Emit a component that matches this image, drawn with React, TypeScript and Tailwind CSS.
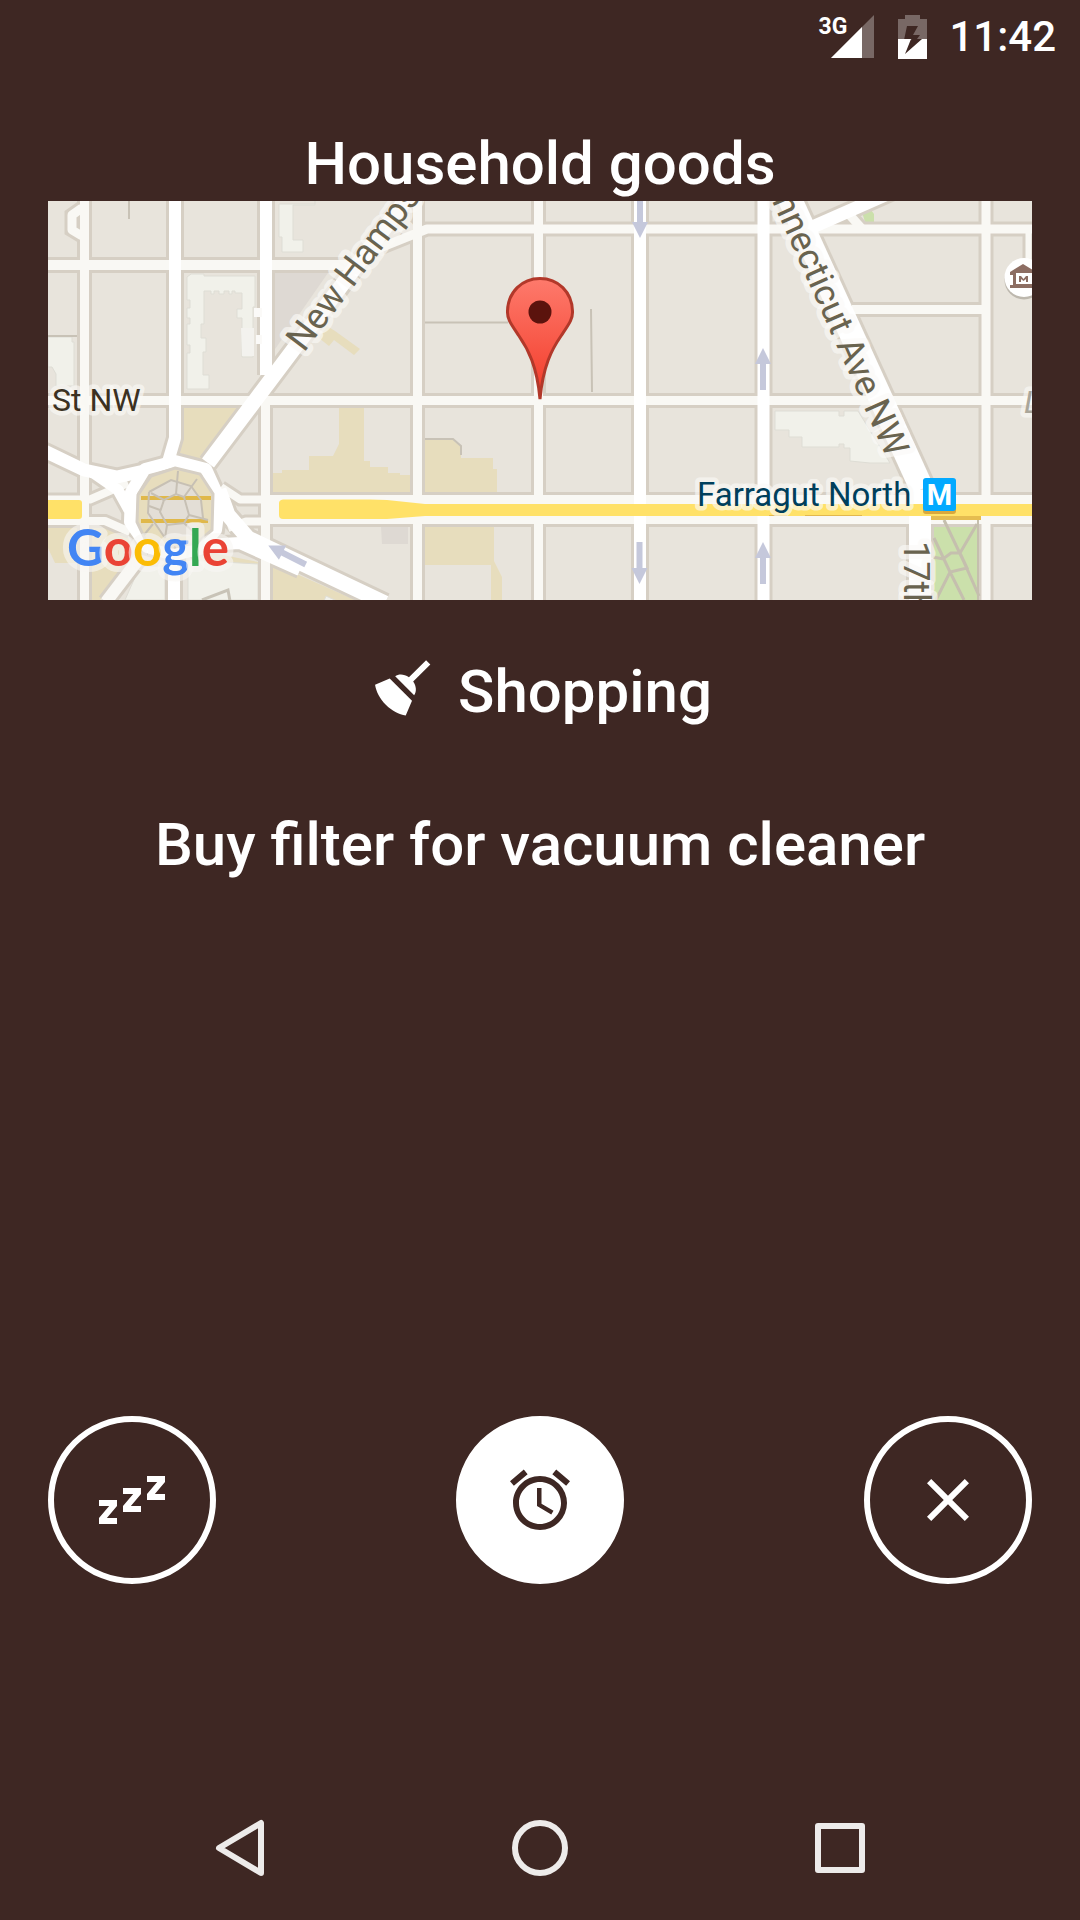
import type { ReactNode } from "react";
import { MdAlarm, MdClose } from "react-icons/md";

const CASING = "#d6cfc4";
const MINOR = "#f9f8f4";
const BEIGE = "#e7ddbd";
const BUILDING = "#f1f1ea";

type Road = { d: string; w: number; color: string };

const roads: Road[] = [
    // side streets
    { d: "M84.500 201V600", w: 9, color: MINOR },
    { d: "M265.500 400V600", w: 9, color: MINOR },
    { d: "M417.500 201V600", w: 9, color: MINOR },
    { d: "M538.500 201V600", w: 9, color: MINOR },
    { d: "M986 201V600", w: 9, color: MINOR },
    { d: "M48 265H350", w: 10, color: MINOR },
    { d: "M360 256L427 229H1032", w: 9, color: MINOR },
    { d: "M48 400.500H1032", w: 9, color: MINOR },
    { d: "M852 309.500H986", w: 9, color: MINOR },
    { d: "M1028.500 229V270", w: 6, color: MINOR },
    { d: "M847 212L863 230", w: 9, color: MINOR },
    { d: "M82 208L72 215V230L82 236", w: 9, color: MINOR },
    { d: "M138 560L106 602", w: 12, color: MINOR },
    // service lanes of the avenue
    { d: "M48 499.500H90L128 483", w: 8, color: MINOR },
    { d: "M48 521H105L130 532", w: 8, color: MINOR },
    { d: "M221 487L240 499.500H270", w: 8, color: MINOR },
    { d: "M228 528L246 521.500H270", w: 8, color: MINOR },
    { d: "M268 509.500H1032", w: 29, color: MINOR },
    // main streets
    { d: "M175 201V438L168 462", w: 12, color: "#fff" },
    { d: "M174 553V600", w: 12, color: "#fff" },
    { d: "M266 201V375", w: 12, color: "#fff" },
    { d: "M640 201V600", w: 12, color: "#fff" },
    { d: "M763.500 201V600", w: 12, color: "#fff" },
    { d: "M208 463L257 398L408 197", w: 15, color: "#fff" },
    { d: "M40 449L84 470L117 477L144 471", w: 13, color: "#fff" },
    { d: "M92 472L118 490L129 510", w: 11, color: "#fff" },
    { d: "M219 490L228 515L248 538L385 603", w: 15, color: "#fff" },
    { d: "M205 545L240 543L300 570", w: 12, color: "#fff" },
    { d: "M808 229L892 192", w: 13, color: "#fff" },
    { d: "M789 197L922 489", w: 24, color: "#fff" },
    { d: "M920 490V604", w: 22, color: "#fff" },
    { d: "M175 461L206 469L220 500L216 530L200 549L174 555L147 547L130 522L131 492L145 469Z", w: 12, color: "#fff" },
];

function Arrow({ x, y, turn }: { x: number; y: number; turn: number }) {
    return (
        <path
            d="M-3 21V-5H-8L0 -21L8 -5H3V21Z"
            transform={`translate(${x} ${y}) rotate(${turn})`}
            fill="#c5c8db"
        />
    );
}

function StreetLabel({ x, y, turn, end, children }: { x: number; y: number; turn: number; end?: boolean; children: ReactNode }) {
    return (
        <text
            transform={`translate(${x} ${y}) rotate(${turn})`}
            textAnchor={end ? "end" : "start"}
            fontSize={36}
            fill="#69634f"
            stroke="#fbfaf7"
            strokeOpacity={0.65}
            strokeWidth={11}
            strokeLinejoin="round"
            paintOrder="stroke"
        >
            {children}
        </text>
    );
}

function StreetMap() {
    return (
        <svg viewBox="48 201 984 399" className="block w-full font-[Roboto,sans-serif]" role="img" aria-label="Map near Farragut North">
            <defs>
                <linearGradient id="pin" x1="0" y1="0" x2="0" y2="1">
                    <stop offset="0" stopColor="#fe7a6c" />
                    <stop offset="1" stopColor="#f23a28" />
                </linearGradient>
            </defs>
            <rect x="48" y="201" width="984" height="399" fill="#e8e4dc" />

            {/* areas */}
            <g fill={BEIGE}>
                <path d="M184 407H243L202 461L180 453Z" />
                <path d="M327 326L335 331L360 349L354 355L334 340L329 346L319 338Z" />
                <path d="M273 492V473H282V470H309V456H333L339 444V407H364V461H370V467H388V473H400V475H410V492Z" />
                <path d="M425 440H453L461 447V458H493V469H497V492H425Z" />
                <path d="M425 526H494V561L502 577V600H491V565H425Z" />
                <path d="M48 527H78V563H55L48 548Z" />
                <path d="M90 527H125L135 560L100 600H90Z" />
                <path d="M192 549L258 562V600H192Z" />
                <path d="M272 563L355 600H272Z" />
            </g>
            <path d="M273 270H330L273 352Z" fill="#ded9d3" />
            <path d="M381 527H408V544H382Z" fill="#ded9d3" />
            <g fill={BUILDING} stroke="#deddd5" strokeWidth="1">
                <path d="M279 204H315V201V205H293V240H303V252H282V237H279Z" />
                <path d="M187 277L191 274H204V276H255V307H253V357H242V318H237V309H242V293H235V291H232V294H229V291H224V294H219V291H214V294H211V291H204V324H201V338H206V352H203V375H209V389H187V353H190V345H187V324H190V318H187V308H190V300H187Z" />
                <path d="M48 337H72V342H74V386H56V374L52 367H48Z" />
                <path d="M775 411H839V416H844V411H858L890 463L870 463L850 461V448H844V444H839V447H802V437H789V430H775Z" />
                <path d="M140 566L125 600H165V566Z" />
                <path d="M188 560L258 564V600H188Z" />
                <path d="M326 596L337 601H324Z" />
            </g>
            <path d="M862 212L871 210L874 214V222H865Z" fill="#cbe0ab" />
            <rect x="928" y="516" width="54" height="84" fill="#cbe0ab" />
            <path d="M202 600L228 590L230 601" fill="none" stroke="#c8c3b7" strokeWidth="3" />
            <g fill="none" stroke="#c8c2b6" strokeWidth="2">
                <path d="M129 201V219M48 336H77M425 322.500H508M591 309L592 392" />
                <path d="M425 439H453L461 446V455" />
            </g>

            {/* streets: every edge first, so that crossings stay open */}
            <g fill="none">
                {roads.map((r) => (
                    <path key={r.d} d={r.d} stroke={CASING} strokeWidth={r.w + 6} />
                ))}
                {roads.map((r) => (
                    <path key={r.d} d={r.d} stroke={r.color} strokeWidth={r.w} strokeLinejoin="round" />
                ))}
            </g>
            <path d="M241 328H254V356H242Z" fill="#f3f2ee" />
            <path d="M254 308H262V317H254ZM256 335H262V344H256Z" fill="#fbfaf8" />

            {/* avenue */}
            <path d="M48 500H79Q82 500 82 503V516Q82 519 79 519H48Z" fill="#ffe168" />
            <path d="M283 499.500H370L387 500L425 504H1032V516H425L387 519H283Q279 519 279 515V503Q279 500 283 499.500Z" fill="#ffe168" />
            <path d="M769 515H787V516H769ZM805 515H862V516H805Z" fill="#e2b84d" />
            <rect x="931" y="516" width="50" height="4" fill="#e5bd50" />

            {/* circle garden */}
            <path d="M175 468L200 474L213 494L212 530L197 543L172 547L146 541L137 522L138 495L151 476Z" fill={BEIGE} stroke={CASING} strokeWidth="3" />
            <path d="M149 491L171 480L191 486L201 500L203 518L190 536L166 538L148 518Z" fill="#e3ded6" />
            <path d="M141 498H211M141 521H208" stroke="#e0b849" strokeWidth="4" />
            <g fill="none" stroke="#c7c0b4" strokeWidth="2">
                <path d="M149 492L171 480L191 486L201 500L203 518M149 492L148 513L165 538" />
                <path d="M164 500L176 494L184 497L189 515L184 523L167 525L160 512Z" />
                <path d="M178 471L176 494M197 479L184 497M151 493L164 500M149 506L160 510M189 515L208 520M184 523L198 536M167 525L165 538M153 524L144 535" />
            </g>

            {/* park paths */}
            <g fill="none" stroke="#c5bfae" strokeWidth="3">
                <path d="M944 520L963 560L979 596M934 538L950 572L964 600M977 524L960 553L967 568L950 572L936 600M933 557L943 559L951 553H960" />
                <path d="M978 520V600" strokeWidth="2" />
            </g>

            <Arrow x={640} y={217} turn={180} />
            <Arrow x={763} y={369} turn={0} />
            <Arrow x={639.5} y={563} turn={180} />
            <Arrow x={763} y={563} turn={0} />
            <Arrow x={287} y={555} turn={-63} />

            <StreetLabel x={304} y={353} turn={-53}>New Hampshire</StreetLabel>
            <StreetLabel x={887} y={459} turn={66} end>Connecticut Ave NW</StreetLabel>
            <StreetLabel x={904} y={541} turn={90}>17th</StreetLabel>

            <g fontSize="32" stroke="#fbfaf7" strokeOpacity="0.65" strokeWidth="9" strokeLinejoin="round" paintOrder="stroke">
                <text x="52" y="411" fill="#3c3122">St NW</text>
                <text x="697" y="506" fontSize="33" fill="#003f5c">Farragut North</text>
                <text x="1024" y="413" fill="#aaa69a" fontStyle="italic">L</text>
            </g>

            {/* metro stop */}
            <rect x="923" y="479" width="33" height="35" rx="3" fill="#d9a83c" />
            <rect x="923" y="478" width="33" height="33" rx="3" fill="#03a9ff" />
            <text x="939.5" y="505" fontSize="29" fontWeight="700" textAnchor="middle" fill="#fff">M</text>

            {/* museum */}
            <circle cx="1024" cy="280" r="19.500" fill="#bdb8ae" />
            <circle cx="1024" cy="277.500" r="19.500" fill="#fff" />
            <path d="M1010 272L1023 264L1036 272V275H1034V285H1036V288H1010V285H1013V275H1010ZM1016 273V284H1032V273Z" fill="#8d6e63" fillRule="evenodd" />
            <path d="M1019 282V276H1021L1023.500 279L1026 276H1028V282H1026V279L1023.500 281L1021 279V282Z" fill="#8d6e63" />

            {/* pin */}
            <path
                d="M540 399C537 366 528 349 519 336C511 324 507 319 507.500 311C508 292 522 278.500 540 278.500C558 278.500 572 292 572.500 311C573 319 569 324 561 336C552 349 543 366 540 399Z"
                fill="url(#pin)"
                stroke="#b2382a"
                strokeWidth="3"
            />
            <circle cx="540" cy="312" r="11.500" fill="#5b130d" />

            <text x="67" y="566" fontSize="51" fontWeight="700" className="font-[Lato,sans-serif]" stroke="#f8f7f3" strokeOpacity="0.6" strokeWidth="12" strokeLinejoin="round" paintOrder="stroke">
                <tspan fill="#4285f4">G</tspan>
                <tspan fill="#ea4335">o</tspan>
                <tspan fill="#fbbc05">o</tspan>
                <tspan fill="#4285f4">g</tspan>
                <tspan fill="#34a853">l</tspan>
                <tspan fill="#ea4335">e</tspan>
            </text>
        </svg>
    );
}

function StatusBar() {
    return (
        <div className="flex h-[74px] items-center justify-end pr-6">
            <div className="flex h-11 items-start">
                <span className="text-[23px] leading-6 font-bold">3G</span>
                <svg width="43" height="43" viewBox="0 0 43 43" className="-ml-4">
                    <path d="M43 0V43H0Z" fill="#fff" opacity=".3" />
                    <path d="M31 12V43H0Z" fill="#fff" />
                </svg>
            </div>
            <svg width="29" height="44" viewBox="0 0 29 44" className="ml-6">
                <path d="M7 0H22V4H29V24H19L22 20H15L20 11H9L6 25H14L13 24H0V4H7Z" fill="#fff" opacity=".3" />
                <path d="M0 24H13L7 39L24 24H29V44H0Z" fill="#fff" />
            </svg>
            <span className="ml-[22px] text-[42px] leading-[60px] font-medium">11:42</span>
        </div>
    );
}

function BroomIcon() {
    return (
        <svg width="72" height="72" viewBox="0 0 24 24" fill="currentColor">
            <path d="M19.36,2.72L20.78,4.14L15.06,9.85C16.13,11.39 16.28,13.24 15.38,14.44L9.06,8.12C10.26,7.22 12.11,7.37 13.65,8.44L19.36,2.72M5.93,17.57C3.92,15.56 2.69,13.16 2.35,10.92L7.23,8.83L14.67,16.27L12.58,21.15C10.34,20.81 7.94,19.58 5.93,17.57Z" />
        </svg>
    );
}

function SleepIcon() {
    return (
        <svg width="72" height="72" viewBox="0 0 24 24" fill="currentColor">
            <path d="M23,12H17V10L20.39,6H17V4H23V6L19.62,10H23V12M15,16H9V14L12.39,10H9V8H15V10L11.62,14H15V16M7,20H1V18L4.39,14H1V12H7V14L3.62,18H7V20Z" />
        </svg>
    );
}

function RoundButton({ label, filled, children }: { label: string; filled?: boolean; children: ReactNode }) {
    return (
        <button
            aria-label={label}
            className={`flex size-[168px] items-center justify-center rounded-full border-6 border-white ${filled ? "bg-white text-[#3e2723]" : ""}`}
        >
            {children}
        </button>
    );
}

function NavBar() {
    return (
        <nav className="flex h-36 items-center justify-center gap-[228px] text-[#edebea]">
            <button aria-label="Back">
                <svg width="72" height="72" viewBox="0 0 72 72" fill="none" stroke="currentColor" strokeWidth="6" strokeLinejoin="round">
                    <path d="M57 11V61L15 36Z" />
                </svg>
            </button>
            <button aria-label="Home">
                <svg width="72" height="72" viewBox="0 0 72 72" fill="none" stroke="currentColor" strokeWidth="6">
                    <circle cx="36" cy="36" r="25" />
                </svg>
            </button>
            <button aria-label="Recent apps">
                <svg width="72" height="72" viewBox="0 0 72 72" fill="none" stroke="currentColor" strokeWidth="6" strokeLinejoin="round">
                    <rect x="14" y="14" width="44" height="44" />
                </svg>
            </button>
        </nav>
    );
}

export default function App() {
    return (
        <div className="flex min-h-screen flex-col bg-[#3e2723] font-[Roboto,sans-serif] text-white">
            <StatusBar />
            <main className="flex flex-1 flex-col px-12 pt-[55px] pb-48">
                <h1 className="pb-[2px] text-center text-[60px] leading-[70px] font-medium">Household goods</h1>
                <StreetMap />
                <div className="mt-[52px] flex justify-center gap-[18px]">
                    <BroomIcon />
                    <h2 className="pt-1 text-[60px] leading-[72px] font-medium">Shopping</h2>
                </div>
                <p className="mt-[81px] text-center text-[60px] leading-[72px] font-medium">Buy filter for vacuum cleaner</p>
                <div className="mt-auto flex justify-between">
                    <RoundButton label="Snooze"><SleepIcon /></RoundButton>
                    <RoundButton label="Remind later" filled><MdAlarm size={72} /></RoundButton>
                    <RoundButton label="Dismiss"><MdClose size={72} /></RoundButton>
                </div>
            </main>
            <NavBar />
        </div>
    );
}
